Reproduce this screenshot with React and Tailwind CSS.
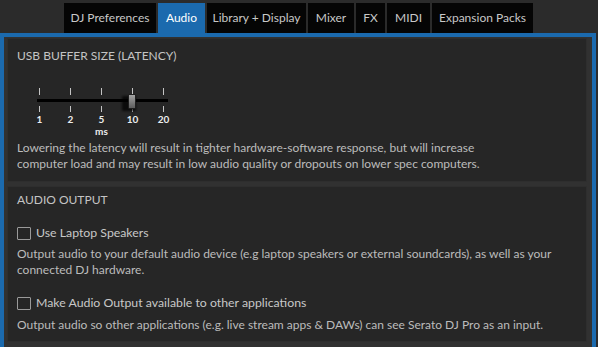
import React from "react";

const tabs = [
  ["DJ Preferences", 92],
  ["Audio", 47],
  ["Library + Display", 99],
  ["Mixer", 46],
  ["FX", 29],
  ["MIDI", 43],
  ["Expansion Packs", 101],
];

function Slider() {
  const xs = [2, 33, 64, 95, 126];
  const labels = ["1", "2", "5", "10", "20"];
  return (
    <div className="relative w-[140px] h-[47px] mt-[24px] ml-[20px]">
      {xs.map((x, i) => (
        <React.Fragment key={i}>
          <div className="absolute w-px h-[7px] bg-[#c4c4c4]" style={{ left: x, top: 0 }} />
          <div className="absolute w-px h-[6px] bg-[#c4c4c4]" style={{ left: x, top: 18 }} />
          <div
            className="absolute w-[20px] -ml-[10px] text-center text-[10px] font-bold text-[#ededed] leading-[10px]"
            style={{ left: x + 0.5, top: 26 }}
          >
            {labels[i]}
          </div>
        </React.Fragment>
      ))}
      <div className="absolute left-0 top-[11px] w-[131px] h-[3px] bg-black" />
      <div className="absolute left-[64.5px] top-[39px] w-[20px] -ml-[10px] text-center text-[10px] font-bold text-[#ededed] leading-[8px]">
        ms
      </div>
      <div className="absolute left-[85px] top-[8px] w-[14px] h-[15px] bg-black/70 rounded-[1px] blur-[1px]" />
      <div className="absolute left-[91px] top-[6px] w-[8px] h-[15px] rounded-[1px] border border-[#1e1e1e] bg-gradient-to-b from-[#a3a3a3] to-[#5e5e5e]" />
    </div>
  );
}

function Checkbox() {
  return <div className="w-[14px] h-[13px] border border-[#9a9a9a] rounded-[1px] shrink-0" />;
}

export default function App() {
  return (
    <div
      className="w-[598px] h-[347px] bg-[#2b2b2b] overflow-hidden flex flex-col"
      style={{ fontFamily: "Lato, 'Liberation Sans', sans-serif" }}
    >
      <div className="h-[33px] flex items-end pl-[64px] gap-[2px] shrink-0">
        {tabs.map(([t, w]) => (
          <div
            key={t}
            style={{ width: w }}
            className={
              t === "Audio"
                ? "h-[30px] flex items-center justify-center text-[12px] bg-[#1b6aae] text-white"
                : "h-[30px] flex items-center justify-center text-[12px] bg-[#050505] text-[#c8c8c8]"
            }
          >
            {t}
          </div>
        ))}
      </div>
      <div className="flex-1 mr-[2px] border-[4px] border-b-0 border-[#1b6aae] bg-[#313131] pl-[3px] pr-[5px] pt-[1px] flex flex-col gap-[4px]">
        <div className="bg-[#262626] border border-[#2e2e2e] h-[144px] shrink-0 px-[9px] pt-[9px]">
          <div className="text-[12px] text-[#c4c4c4] leading-[16px]">USB BUFFER SIZE (LATENCY)</div>
          <Slider />
          <div className="text-[12px] text-[#bcbcbc] leading-[16px] mt-[5px]">
            Lowering the latency will result in tighter hardware-software response, but will increase
            <br />
            computer load and may result in low audio quality or dropouts on lower spec computers.
          </div>
        </div>
        <div className="bg-[#262626] border border-[#2e2e2e] h-[156px] shrink-0 px-[9px] pt-[5px]">
          <div className="text-[12px] text-[#c4c4c4] leading-[16px]">AUDIO OUTPUT</div>
          <div className="flex items-center gap-[5px] mt-[16px]">
            <Checkbox />
            <div className="text-[12.3px] text-[#c8c8c8] leading-[18px]">Use Laptop Speakers</div>
          </div>
          <div className="text-[12px] text-[#bcbcbc] leading-[16px] mt-[4px]">
            Output audio to your default audio device (e.g laptop speakers or external soundcards), as well as your
            <br />
            connected DJ hardware.
          </div>
          <div className="flex items-center gap-[5px] mt-[16px]">
            <Checkbox />
            <div className="text-[12.3px] text-[#c8c8c8] leading-[18px]">Make Audio Output available to other applications</div>
          </div>
          <div className="text-[12px] text-[#bcbcbc] leading-[16px] mt-[5px]">
            Output audio so other applications (e.g. live stream apps &amp; DAWs) can see Serato DJ Pro as an input.
          </div>
        </div>
      </div>
    </div>
  );
}
